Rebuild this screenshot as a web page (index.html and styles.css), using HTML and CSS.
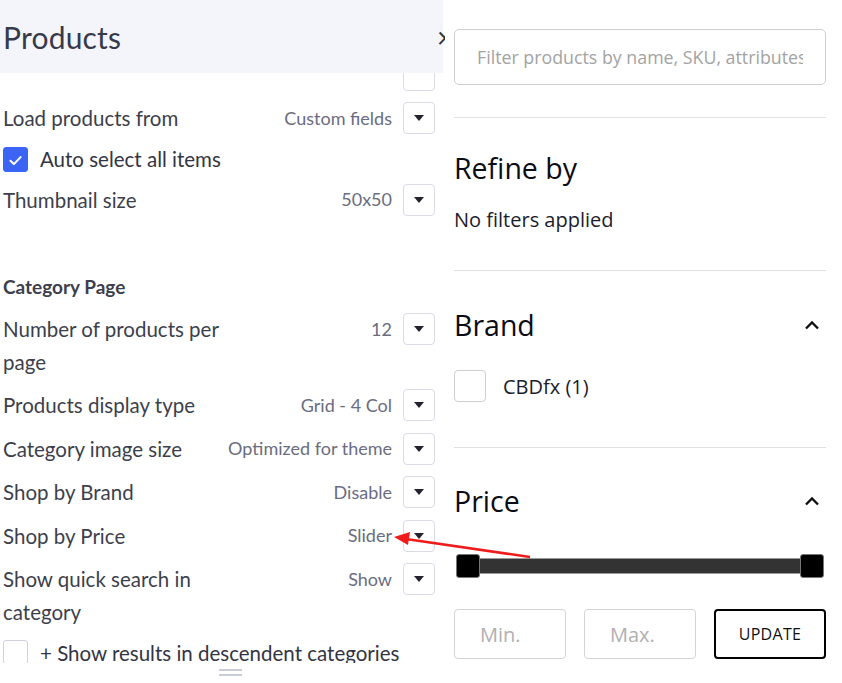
FILE: index.html
```html
<!DOCTYPE html>
<html lang="en">
<head>
<meta charset="utf-8">
<title>Products settings</title>
<link rel="stylesheet" href="styles.css">
</head>
<body>
<div class="page">
  <aside class="panel">
    <header class="panel-head">
      <h1 class="panel-title">Products</h1>
      <span class="close"><span class="close-glyph">×</span></span>
    </header>
    <div class="panel-body">
      <div class="rows">
        <div class="row stub"><span class="label"></span><span class="control"><span class="select"></span></span></div>
        <div class="row"><span class="label">Load products from</span><span class="control"><span class="value">Custom fields</span><span class="select"><i class="tri"></i></span></span></div>
        <div class="check-row"><span class="checkbox on"><svg viewBox="0 0 25 25" width="25" height="25"><path d="M7 12.8 L10.8 16.4 L18 8.8" fill="none" stroke="#fff" stroke-width="2.2" stroke-linecap="round" stroke-linejoin="round"/></svg></span><span class="check-label">Auto select all items</span></div>
        <div class="row"><span class="label">Thumbnail size</span><span class="control"><span class="value">50x50</span><span class="select"><i class="tri"></i></span></span></div>
        <div class="section-title">Category Page</div>
        <div class="row"><span class="label">Number of products per page</span><span class="control"><span class="value">12</span><span class="select"><i class="tri"></i></span></span></div>
        <div class="row"><span class="label">Products display type</span><span class="control"><span class="value">Grid - 4 Col</span><span class="select"><i class="tri"></i></span></span></div>
        <div class="row"><span class="label">Category image size</span><span class="control"><span class="value">Optimized for theme</span><span class="select"><i class="tri"></i></span></span></div>
        <div class="row"><span class="label">Shop by Brand</span><span class="control"><span class="value">Disable</span><span class="select"><i class="tri"></i></span></span></div>
        <div class="row"><span class="label">Shop by Price</span><span class="control"><span class="value">Slider</span><span class="select"><i class="tri"></i></span></span></div>
        <div class="row"><span class="label">Show quick search in category</span><span class="control"><span class="value">Show</span><span class="select"><i class="tri"></i></span></span></div>
        <div class="check-row"><span class="checkbox"></span><span class="check-label">+ Show results in descendent categories</span></div>
      </div>
    </div>
    <div class="handle"><i></i><i></i></div>
  </aside>

  <main class="filters">
    <div class="search"><span class="placeholder">Filter products by name, SKU, attributes...</span></div>
    <section class="block refine">
      <h2 class="block-title">Refine by</h2>
      <p class="muted">No filters applied</p>
    </section>
    <section class="block brand">
      <div class="block-head"><h2 class="block-title">Brand</h2><svg class="chev" viewBox="0 0 16 10" width="16" height="10"><path d="M2 8.5 L8 2.5 L14 8.5" fill="none" stroke="#111" stroke-width="2.4"/></svg></div>
      <label class="brand-item"><span class="box"></span><span>CBDfx (1)</span></label>
    </section>
    <section class="block price">
      <div class="block-head"><h2 class="block-title">Price</h2><svg class="chev" viewBox="0 0 16 10" width="16" height="10"><path d="M2 8.5 L8 2.5 L14 8.5" fill="none" stroke="#111" stroke-width="2.4"/></svg></div>
      <div class="slider"><span class="knob"></span><span class="track"></span><span class="knob"></span></div>
      <div class="price-row">
        <span class="price-input">Min.</span>
        <span class="price-input">Max.</span>
        <span class="update">UPDATE</span>
      </div>
    </section>
  </main>

  <svg class="annotation" width="842" height="683" viewBox="0 0 842 683">
    <line x1="530" y1="557" x2="406" y2="539" stroke="#ee1c1c" stroke-width="2.6"/>
    <polygon points="394,537 410,532 408,545" fill="#ee1c1c"/>
  </svg>
</div>
</body>
</html>
```

FILE: styles.css
```css
* { box-sizing: border-box; }
html, body { margin: 0; padding: 0; background: #fff; }
body { width: 842px; height: 683px; overflow: hidden; }

.page {
  position: relative;
  display: flex;
  width: 842px;
  height: 683px;
}

/* ---------- left settings panel ---------- */
.panel {
  width: 443px;
  flex: 0 0 443px;
  display: flex;
  flex-direction: column;
  font-family: "Lato", "Open Sans", sans-serif;
  color: #3d3f4c;
}
.panel-head {
  height: 73px;
  flex: 0 0 73px;
  background: #f4f5fa;
  display: flex;
  align-items: center;
  padding: 0 0 0 3px;
  position: relative;
}
.panel-title {
  margin: 0;
  font-weight: 400;
  font-size: 30px;
  color: #373a4a;
  line-height: 1;
  letter-spacing: 0.2px;
}
.close {
  position: absolute;
  left: 437px;
  top: 22px;
  width: 8px;
  height: 30px;
  overflow: hidden;
}
.close-glyph {
  display: block;
  font-size: 28px;
  color: #333;
  line-height: 30px;
}
.panel-body {
  height: 590px;
  flex: 0 0 590px;
  overflow: hidden;
  padding: 0 8px 0 3px;
}
.rows {
  display: flex;
  flex-direction: column;
  gap: 11px;
  margin-top: -14px;
  font-size: 20.5px;
}
.row {
  display: flex;
  align-items: flex-start;
  justify-content: space-between;
  line-height: 32.5px;
}
.label { flex: 0 1 232px; }
.control {
  display: flex;
  align-items: center;
  gap: 11px;
  height: 32px;
  flex: 0 0 auto;
}
.value {
  color: #6a6d80;
  font-size: 18px;
}
.select {
  width: 32px;
  height: 32px;
  border: 1px solid #d9dce8;
  border-radius: 4px;
  background: #fff;
  display: flex;
  align-items: center;
  justify-content: center;
}
.tri {
  display: block;
  width: 0;
  height: 0;
  border-left: 5px solid transparent;
  border-right: 5px solid transparent;
  border-top: 6px solid #23232e;
}
.check-row {
  display: flex;
  align-items: center;
  gap: 12px;
  height: 27px;
  white-space: nowrap;
}
.checkbox {
  width: 25px;
  height: 25px;
  flex: 0 0 25px;
  border-radius: 3px;
  border: 1px solid #cfd2dc;
  background: #fff;
  display: flex;
}
.checkbox.on { background: #3c64f4; border-color: #3c64f4; }
.check-label { color: #333543; }
.section-title {
  margin-top: 44px;
  line-height: 31px;
  font-weight: 700;
  font-size: 19px;
  color: #3d3f4c;
}
.handle {
  flex: 1;
  display: flex;
  flex-direction: column;
  align-items: center;
  justify-content: center;
  gap: 3px;
  padding-left: 18px;
  padding-bottom: 2px;
}
.handle i {
  display: block;
  width: 23px;
  height: 2px;
  background: #c9ccd9;
}

/* ---------- right filter column ---------- */
.filters {
  width: 372px;
  margin-left: 11px;
  font-family: "Open Sans", "Noto Sans", sans-serif;
  color: #121222;
  padding-top: 29px;
}
.search {
  height: 56px;
  border: 1px solid #cfcfcf;
  border-radius: 5px;
  padding: 0 22px 0 22px;
  display: flex;
  align-items: center;
  overflow: hidden;
}
.placeholder {
  display: block;
  width: 100%;
  overflow: hidden;
  white-space: nowrap;
  font-size: 17.8px;
  color: #a3a3a3;
}
.block {
  border-top: 1px solid #e1e1e1;
}
.block-title {
  margin: 0;
  font-weight: 400;
  font-size: 28.5px;
  line-height: 40px;
  color: #0c0c14;
}
.block-head {
  display: flex;
  align-items: center;
  justify-content: space-between;
  padding-right: 6px;
}
.refine { margin-top: 32px; padding-top: 30px; padding-bottom: 37px; }
.muted { margin: 19px 0 0; font-size: 20px; line-height: 26px; color: #1c1c2c; }
.brand { padding-top: 34px; padding-bottom: 45px; }
.price { padding-top: 33px; }
.brand-item {
  display: flex;
  align-items: center;
  gap: 17px;
  margin-top: 25px;
  font-size: 20px;
  color: #1c1c2c;
}
.box {
  width: 32px;
  height: 32px;
  border: 1px solid #cfcfcf;
  border-radius: 4px;
}
.slider {
  display: flex;
  align-items: center;
  margin: 33px 2px 0;
  height: 24px;
}
.knob {
  width: 24px;
  height: 24px;
  background: #000;
  border-radius: 3px;
  border: 1px solid #777;
  flex: 0 0 24px;
}
.track {
  flex: 1;
  height: 16px;
  background: #333;
  border-top: 1px solid #999;
  border-bottom: 1px solid #999;
}
.price-row {
  display: flex;
  justify-content: space-between;
  margin-top: 31px;
}
.price-input, .update {
  width: 112px;
  height: 50px;
  border-radius: 4px;
  display: flex;
  align-items: center;
}
.price-input {
  border: 1px solid #d4d4d4;
  color: #b0b0b0;
  font-size: 20px;
  padding-left: 25px;
}
.update {
  justify-content: center;
  border: 2px solid #000;
  color: #111;
  font-size: 16px;
  letter-spacing: 0.3px;
}

.annotation {
  position: absolute;
  left: 0;
  top: 0;
  pointer-events: none;
}
```
